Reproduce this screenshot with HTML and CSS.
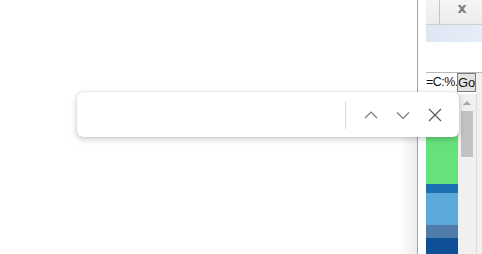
FILE: index.html
```html
<!DOCTYPE html>
<html>
<head>
<meta charset="utf-8">
<link rel="stylesheet" href="styles.css">
</head>
<body>
<div class="page">
  <div class="main"><div class="fade"></div></div>
  <div class="gutter"></div>
  <div class="panel">
    <div class="hdr">
      <div class="hdr-cell"></div>
      <div class="hdr-close">x</div>
    </div>
    <div class="blue-row"></div>
    <div class="blank"></div>
    <div class="cmd">
      <div class="cmd-input">=C:%.</div>
      <div class="cmd-go">Go</div>
      <div class="cmd-rest"></div>
    </div>
    <div class="body">
      <div class="content">
        <div class="s-white"></div>
        <div class="s-green"></div>
        <div class="s-dblue"></div>
        <div class="s-lblue"></div>
        <div class="s-gblue"></div>
        <div class="s-navy"></div>
      </div>
      <div class="scroll">
        <div class="arrow"></div>
        <div class="thumb"></div>
      </div>
      <div class="edge"></div>
    </div>
  </div>
</div>
<div class="findbar">
  <div class="find-input"></div>
  <div class="find-div"></div>
  <button class="fbtn" aria-label="Previous">
    <svg width="14" height="14" viewBox="0 0 14 14"><path d="M1 10 L7 4 L13 10" fill="none" stroke="#7a7a7a" stroke-width="1.2"/></svg>
  </button>
  <button class="fbtn" aria-label="Next">
    <svg width="14" height="14" viewBox="0 0 14 14"><path d="M1 4.5 L7 10.5 L13 4.5" fill="none" stroke="#7a7a7a" stroke-width="1.2"/></svg>
  </button>
  <button class="fbtn" aria-label="Close">
    <svg width="14" height="14" viewBox="0 0 14 14"><path d="M1 1 L13 13 M13 1 L1 13" fill="none" stroke="#555" stroke-width="1.1"/></svg>
  </button>
</div>
</body>
</html>
```
FILE: styles.css
```css
html, body {
  margin: 0;
  padding: 0;
  width: 482px;
  height: 254px;
  overflow: hidden;
  background: #fff;
  font-family: "Liberation Sans", Arial, sans-serif;
}
.page {
  display: flex;
  height: 254px;
}
.main {
  width: 417px;
  border-right: 1px solid #a3a3a3;
  display: flex;
  justify-content: flex-end;
  align-items: flex-end;
}
.fade {
  width: 17px;
  height: 160px;
  background: linear-gradient(to right, #fff, #ececec);
}
.gutter {
  width: 8px;
  background: #fff;
}
.panel {
  width: 56px;
  display: flex;
  flex-direction: column;
}
.hdr {
  height: 24px;
  display: flex;
  background: linear-gradient(to bottom, #f5f5f5, #ececec);
  border-bottom: 1px solid #d0d0d0;
}
.hdr-cell {
  width: 13px;
  border-right: 1px solid #c4c4c4;
}
.hdr-close {
  flex: 1;
  text-align: center;
  font-family: "DejaVu Sans", sans-serif;
  font-weight: bold;
  font-size: 14px;
  line-height: 17px;
  color: #7c7c7c;
  padding-left: 2px;
}
.blue-row {
  height: 17px;
  background: linear-gradient(to right, #dde6f3, #e6edf8);
}
.blank {
  height: 30px;
  background: #fff;
}
.cmd {
  height: 21px;
  display: flex;
  border-top: 1px solid #b8b8b8;
}
.cmd-input {
  width: 31px;
  overflow: hidden;
  white-space: nowrap;
  font-size: 12.5px;
  letter-spacing: -0.5px;
  line-height: 19px;
  color: #111;
  background: #fff;
}
.cmd-go {
  width: 17px;
  height: 17px;
  overflow: hidden;
  border: 1px solid #7a7a7a;
  background: #e3e3e3;
  font-size: 13px;
  line-height: 17px;
  text-align: center;
  color: #111;
}
.cmd-rest {
  flex: 1;
  background: #f0f0f0;
}
.body {
  flex: 1;
  display: flex;
}
.content {
  width: 32px;
  display: flex;
  flex-direction: column;
}
.s-white { height: 30px; background: #fff; }
.s-green { height: 60px; background: #66e27c; }
.s-dblue { height: 9px; background: #1d70b0; }
.s-lblue { height: 32px; background: #5ba9da; }
.s-gblue { height: 13px; background: #4f7ca8; }
.s-navy { flex: 1; background: #0d5096; }
.scroll {
  width: 18px;
  background: #f0f0f0;
  display: flex;
  flex-direction: column;
  align-items: center;
}
.arrow {
  margin-top: 7px;
  width: 0;
  height: 0;
  border-left: 4px solid transparent;
  border-right: 4px solid transparent;
  border-bottom: 4px solid #a6a6a6;
}
.thumb {
  margin-top: 6px;
  width: 12px;
  height: 46px;
  background: #c2c2c2;
}
.edge {
  flex: 1;
  background: #f0f0f0;
  border-left: 1px solid #dcdcdc;
}
.findbar {
  position: absolute;
  left: 77px;
  top: 92px;
  width: 382px;
  height: 45px;
  background: #fff;
  border-radius: 6px;
  box-shadow: 0 2px 6px rgba(0,0,0,0.22), 0 0 1px rgba(0,0,0,0.25);
  display: flex;
  align-items: center;
  box-sizing: border-box;
  padding-right: 8px;
}
.find-input {
  width: 269px;
  height: 100%;
}
.find-div {
  width: 1px;
  height: 28px;
  background: #dadada;
  margin-right: 9px;
}
.fbtn {
  width: 32px;
  height: 45px;
  border: 0;
  padding: 0;
  background: transparent;
  display: flex;
  align-items: center;
  justify-content: center;
}
.fbtn svg { display: block; }
```
